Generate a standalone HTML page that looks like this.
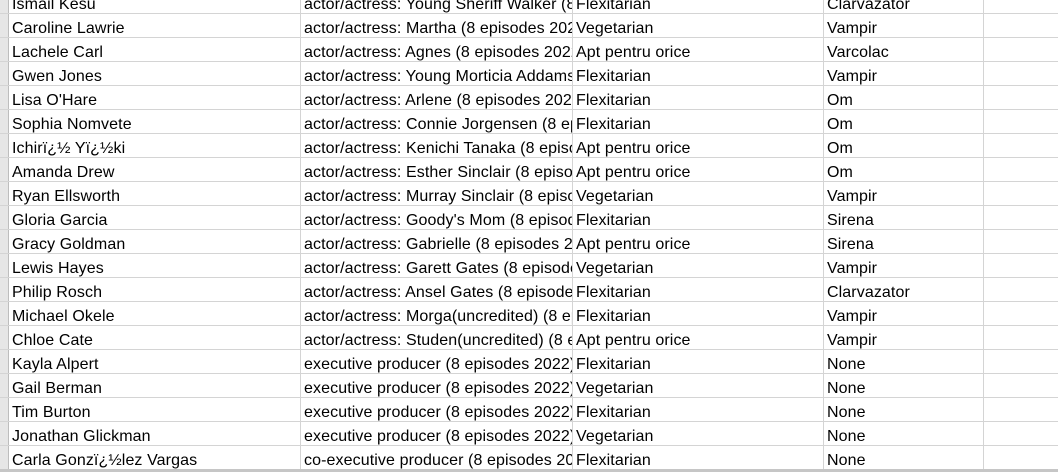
<!DOCTYPE html><html><head><style>
body{margin:0;width:1058px;height:472px;overflow:hidden;background:#fff;font-family:"Liberation Sans",Carlito,sans-serif;font-size:16px;letter-spacing:0.1px;color:#000;position:relative}
.r{position:absolute;left:0;width:1058px;height:24px;border-bottom:1px solid #d4d4d4;box-sizing:border-box}
.h{position:absolute;left:0;top:0;width:8px;height:23px;background:#e6e6e6;border-right:1px solid #bdbdbd}
.c{position:absolute;top:0;height:23px;line-height:29px;white-space:nowrap;overflow:hidden;padding-left:4px;box-sizing:border-box;border-right:1px solid #d4d4d4}
.a{left:8px;width:293px}.b{left:300px;width:273px}.d{left:572px;width:252px}.e{left:823px;width:81px;overflow:visible}.f{left:903px;width:81px}.g{left:983px;width:75px;border-right:none}
.bot{position:absolute;left:0;top:469px;width:1058px;height:3px;background:#c6c6c6}
</style></head><body>
<div id="w"></div>
<script>
const d=[["Ismail Kesu","actor/actress: Young Sheriff Walker (8 episodes","Flexitarian","Clarvazator"],
["Caroline Lawrie","actor/actress: Martha (8 episodes 2022)","Vegetarian","Vampir"],
["Lachele Carl","actor/actress: Agnes (8 episodes 2022)","Apt pentru orice","Varcolac"],
["Gwen Jones","actor/actress: Young Morticia Addams","Flexitarian","Vampir"],
["Lisa O'Hare","actor/actress: Arlene (8 episodes 2022)","Flexitarian","Om"],
["Sophia Nomvete","actor/actress: Connie Jorgensen (8 episodes","Flexitarian","Om"],
["Ichirï¿½ Yï¿½ki","actor/actress: Kenichi Tanaka (8 episodes","Apt pentru orice","Om"],
["Amanda Drew","actor/actress: Esther Sinclair (8 episodes","Apt pentru orice","Om"],
["Ryan Ellsworth","actor/actress: Murray Sinclair (8 episodes","Vegetarian","Vampir"],
["Gloria Garcia","actor/actress: Goody's Mom (8 episodes","Flexitarian","Sirena"],
["Gracy Goldman","actor/actress: Gabrielle (8 episodes 2022)","Apt pentru orice","Sirena"],
["Lewis Hayes","actor/actress: Garett Gates (8 episodes","Vegetarian","Vampir"],
["Philip Rosch","actor/actress: Ansel Gates (8 episodes","Flexitarian","Clarvazator"],
["Michael Okele","actor/actress: Morga(uncredited) (8 episodes","Flexitarian","Vampir"],
["Chloe Cate","actor/actress: Studen(uncredited) (8 episodes","Apt pentru orice","Vampir"],
["Kayla Alpert","executive producer (8 episodes 2022)","Flexitarian","None"],
["Gail Berman","executive producer (8 episodes 2022)","Vegetarian","None"],
["Tim Burton","executive producer (8 episodes 2022)","Flexitarian","None"],
["Jonathan Glickman","executive producer (8 episodes 2022)","Vegetarian","None"],
["Carla Gonzï¿½lez Vargas","co-executive producer (8 episodes 2022)","Flexitarian","None"]];
let h="";d.forEach((r,i)=>{h+=`<div class="r" style="top:${-10+24*i}px"><div class="h"></div><div class="c a">${r[0]}</div><div class="c b">${r[1]}</div><div class="c d">${r[2]}</div><div class="c f"></div><div class="c g"></div><div class="c e" style="border-right:none">${r[3]}</div></div>`});
document.getElementById("w").innerHTML=h+'<div class="bot"></div>';
</script>
</body></html>
